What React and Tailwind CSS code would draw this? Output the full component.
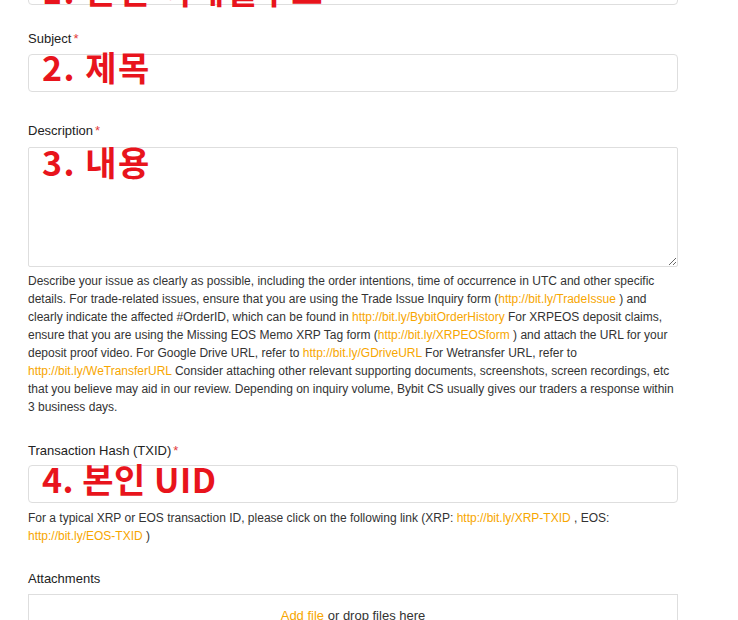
import React from 'react';

const FONT = { fontFamily: '"Liberation Sans", Arial, sans-serif' };
const KR = { fontFamily: '"Noto Sans CJK KR", "Noto Sans", sans-serif' };

const Link = ({ children }) => <span className="text-[#f7a600]">{children}</span>;

const Label = ({ children, required = true }) => (
    <div className="text-[13px] leading-4 text-[#222]">
        {children}
        {required && <span className="text-[#e23b3b] ml-[2px]">*</span>}
    </div>
);

const Note = ({ children, className = '' }) => (
    <div className={`absolute left-[14px] text-[34px] font-bold leading-none text-[#e8141c] pointer-events-none whitespace-nowrap ${className}`} style={KR}>
        {children}
    </div>
);

const Field = ({ note, noteClass }) => (
    <div className="relative">
        <input className="block w-full h-[38px] border border-[#dedede] rounded-[4px] bg-white outline-none" />
        <Note className={noteClass}>{note}</Note>
    </div>
);

export default function App() {
    return (
        <div className="h-[620px] bg-white overflow-hidden" style={FONT}>
            <div className="w-[650px] ml-[28px]">
                <div className="-mt-[33px]">
                    <Field note="1. 본인 이메일주소" noteClass="top-[6px] tracking-[1.5px]" />
                </div>

                <div className="mt-[26px]">
                    <Label>Subject</Label>
                    <div className="mt-[7px]">
                        <Field note="2. 제목" noteClass="-top-[4px] tracking-[1.5px]" />
                    </div>
                </div>

                <div className="mt-[31px]">
                    <Label>Description</Label>
                    <div className="relative mt-[8px]">
                        <textarea className="block w-full h-[120px] border border-[#dedede] rounded-[2px] bg-white outline-none resize-y" />
                        <Note className="-top-[2px] tracking-[1.5px]">3. 내용</Note>
                    </div>
                    <p className="mt-[5px] text-[12px] leading-[18px] text-[#333]">
                        Describe your issue as clearly as possible, including the order intentions, time of occurrence in UTC and other specific details. For trade-related issues, ensure that you are using the Trade Issue Inquiry form (<Link>http://bit.ly/TradeIssue</Link> ) and clearly indicate the affected #OrderID, which can be found in <Link>http://bit.ly/BybitOrderHistory</Link> For XRPEOS deposit claims, ensure that you are using the Missing EOS Memo XRP Tag form (<Link>http://bit.ly/XRPEOSform</Link> ) and attach the URL for your deposit proof video. For Google Drive URL, refer to <Link>http://bit.ly/GDriveURL</Link> For Wetransfer URL, refer to <Link>http://bit.ly/WeTransferURL</Link> Consider attaching other relevant supporting documents, screenshots, screen recordings, etc that you believe may aid in our review. Depending on inquiry volume, Bybit CS usually gives our traders a response within 3 business days.
                    </p>
                </div>

                <div className="mt-[27px]">
                    <Label>Transaction Hash (TXID)</Label>
                    <div className="mt-[6px]">
                        <Field note="4. 본인 UID" noteClass="-top-[3px] tracking-[0.5px]" />
                    </div>
                    <p className="mt-[6px] text-[12px] leading-[18px] text-[#333]">
                        For a typical XRP or EOS transaction ID, please click on the following link (XRP: <Link>http://bit.ly/XRP-TXID</Link> , EOS: <Link>http://bit.ly/EOS-TXID</Link> )
                    </p>
                </div>

                <div className="mt-[26px]">
                    <Label required={false}>Attachments</Label>
                    <div className="mt-[7px] h-[80px] border border-[#dedede] flex justify-center pt-[13px]">
                        <span className="text-[13px] leading-4 text-[#333]">
                            <Link>Add file</Link> or drop files here
                        </span>
                    </div>
                </div>
            </div>
        </div>
    );
}
